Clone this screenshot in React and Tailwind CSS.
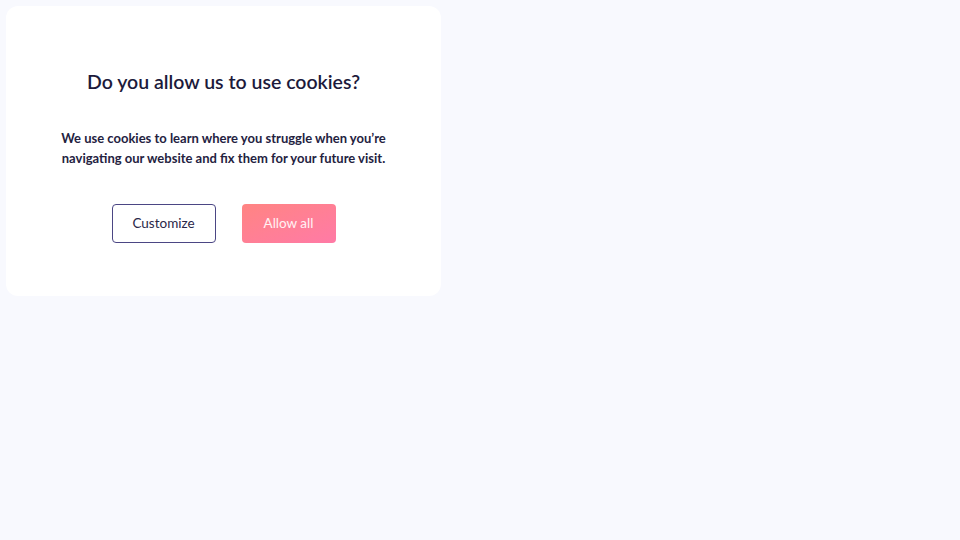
export default function App() {
  return (
    <div className="min-h-screen w-full bg-[#f8f9fe] p-[6px] font-['Lato','Noto_Sans',sans-serif]">
      <div className="w-[435px] h-[290px] bg-white rounded-[12px] flex flex-col items-center pt-[62px]">
        <h1 className="text-[19.5px] leading-[28px] font-semibold text-[#1c1a3b]">Do you allow us to use cookies?</h1>
        <p className="mt-[32px] text-center text-[13px] leading-[20px] font-bold text-[#24223f]">
          We use cookies to learn where you struggle when you’re<br />
          navigating our website and fix them for your future visit.
        </p>
        <div className="mt-[36px] flex gap-[26px]">
          <button className="w-[104px] h-[39px] rounded-[4px] border border-[#4b4684] bg-white text-[13.5px] text-[#2a2748]">Customize</button>
          <button className="w-[94px] h-[39px] rounded-[4px] bg-gradient-to-br from-[#ff8482] to-[#ff7aa6] text-[13.5px] text-white/90">Allow all</button>
        </div>
      </div>
    </div>
  )
}
